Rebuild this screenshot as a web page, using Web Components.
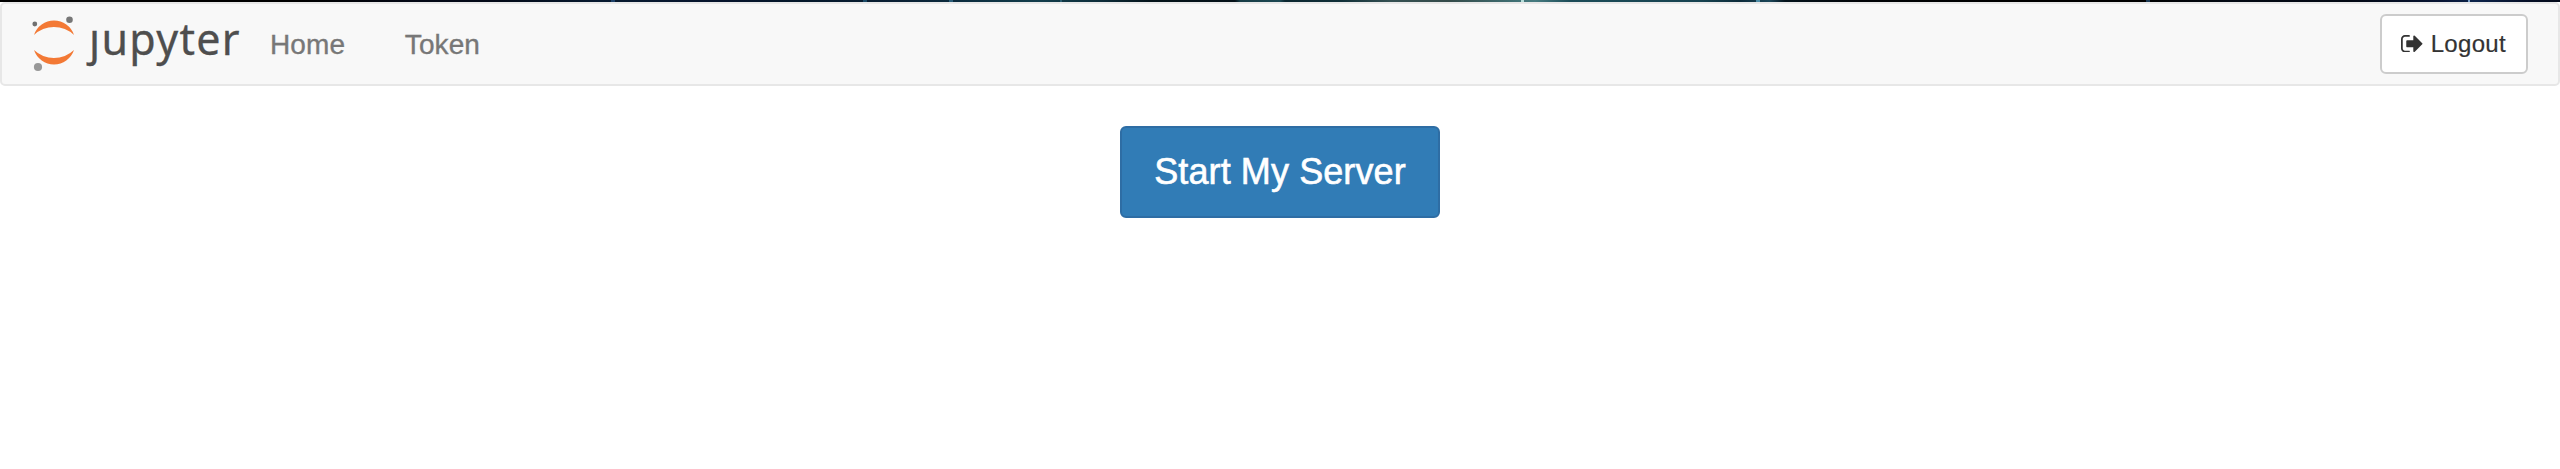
<!DOCTYPE html>
<html lang="en">
<head>
<meta charset="utf-8">
<title>JupyterHub</title>
<style>
body{margin:0;background:#fff;font-family:"Liberation Sans",Arial,sans-serif}
</style>
</head>
<body>
<hub-page>
  <hub-navbar slot="nav">
    <hub-logo slot="brand"></hub-logo>
    <nav-link>Home</nav-link>
    <nav-link>Token</nav-link>
    <logout-button slot="end">Logout</logout-button>
  </hub-navbar>
  <start-button>Start My Server</start-button>
</hub-page>
<script>
const define = (name, html) => customElements.define(name, class extends HTMLElement {
  constructor() {
    super();
    this.attachShadow({mode: 'open'}).innerHTML = html;
  }
});

define('hub-page', `<style>
:host{display:flex;flex-direction:column;height:469px;overflow:hidden}
.backdrop{height:2px;flex:none;background:
 linear-gradient(90deg,transparent 611px,#1d4068 611px 615px,transparent 615px 863px,#1b4a66 863px 867px,transparent 867px 949px,#2b5d78 949px 953px,transparent 953px 1060px,#2b5d70 1060px 1062px,transparent 1062px 1521px,#b4dcd8 1521px 1524px,transparent 1524px 1756px,#4c8ca6 1756px 1760px,transparent 1760px 2146px,#1c3a55 2146px 2150px,transparent 2150px 2468px,#7b9fc8 2468px 2470px,transparent 2470px),
 linear-gradient(90deg,#000 0,#000 300px,#030816 420px,#030a18 500px,#071a30 600px,#06142c 720px,#04172a 800px,#0a2034 900px,#0b2c3e 960px,#123d4b 1040px,#0d2d3a 1100px,#04131a 1150px,#051118 1235px,#173c46 1240px,#1c4852 1280px,#0b2730 1285px,#102f38 1340px,#345052 1390px,#344b4a 1450px,#3e6c70 1510px,#467b80 1535px,#1c4c58 1570px,#164250 1700px,#0c2b3a 1740px,#1b4658 1770px,#04131c 1785px,#010407 1860px,#000 2000px,#000 2140px,#030a14 2230px,#020813 2350px,#071433 2440px,#0c234a 2475px,#050e25 2530px,#040a1a 2560px)}
main{display:flex;justify-content:center;padding-top:40px}
</style><div class="backdrop"></div><slot name="nav"></slot><main><slot></slot></main>`);

define('hub-navbar', `<style>
:host{display:flex;align-items:center;box-sizing:border-box;height:84px;flex:none;border:2px solid #e7e7e7;border-radius:5px;background:#f8f8f8;padding:0 30px}
nav{display:flex;margin-left:1px}
.end{margin-left:auto}
</style><slot name="brand"></slot><nav><slot></slot></nav><div class="end"><slot name="end"></slot></div>`);

define('hub-logo', `<style>
:host{display:flex;width:207px;height:80px;color:#4e4e4e}
svg{width:46px;height:80px;flex:none}
.word{font:43px/69px "Noto Sans","Open Sans",sans-serif;margin-left:11px;display:flex;letter-spacing:1.3px;white-space:nowrap;-webkit-text-stroke:.3px #4e4e4e}
.j{clip-path:inset(26px -10px -10px -15px)}
</style><svg viewBox="32 4 46 80"><g fill="#f37935"><path d="M34 35A21.1 21.1 0 0 1 74 35A29 29 0 0 0 34 35Z"/><path d="M34 50A21.1 21.1 0 0 0 74 50A29 29 0 0 1 34 50Z"/></g><circle cx="34.8" cy="24" r="2.4" fill="#707070"/><circle cx="69.5" cy="19.7" r="3.3" fill="#777"/><circle cx="38" cy="67" r="4.1" fill="#989898"/></svg><div class="word"><span class="j">j</span><span>upyter</span></div>`);

define('nav-link', `<style>
:host{display:block;padding:1px 29.7px 0 30px;font-size:28px;line-height:40px;letter-spacing:.1px;color:#777;-webkit-text-stroke:.35px #777}
</style><slot></slot>`);

define('logout-button', `<style>
:host{display:flex;align-items:center;box-sizing:border-box;width:148px;height:60px;border:2px solid #ccc;border-radius:6px;background:#fff;color:#333;font-size:24px;line-height:36px;padding-left:19px;letter-spacing:.3px;-webkit-text-stroke:.2px #333}
svg{width:21.5px;height:17.5px;margin:0 8.2px 1px 0;fill:#333}
</style><svg viewBox="64 256 1568 1280" preserveAspectRatio="none"><path d="M704 1440q0 4 1 20t.5 26.5-3 23.5-10 19.5-20.5 6.5h-320q-119 0-203.5-84.5t-84.5-203.5v-704q0-119 84.5-203.5t203.5-84.5h320q13 0 22.5 9.5t9.5 22.5q0 4 1 20t.5 26.5-3 23.5-10 19.5-20.5 6.5h-320q-66 0-113 47t-47 113v704q0 66 47 113t113 47h312l11.5 1 11.5 3 8 5.5 7 9 2 13.5zm928-544q0 26-19 45l-544 544q-19 19-45 19t-45-19-19-45v-288h-448q-26 0-45-19t-19-45v-384q0-26 19-45t45-19h448v-288q0-26 19-45t45-19 45 19l544 544q19 19 19 45z"/></svg><slot></slot>`);

define('start-button', `<style>
:host{display:flex;align-items:center;justify-content:center;box-sizing:border-box;width:320px;height:92px;border:2px solid #2e6da4;border-radius:6px;background:#317cb6;color:#fff;font-size:36px;line-height:48px;letter-spacing:.1px;-webkit-text-stroke:.6px #fff;white-space:nowrap}
</style><slot></slot>`);
</script>
</body>
</html>
